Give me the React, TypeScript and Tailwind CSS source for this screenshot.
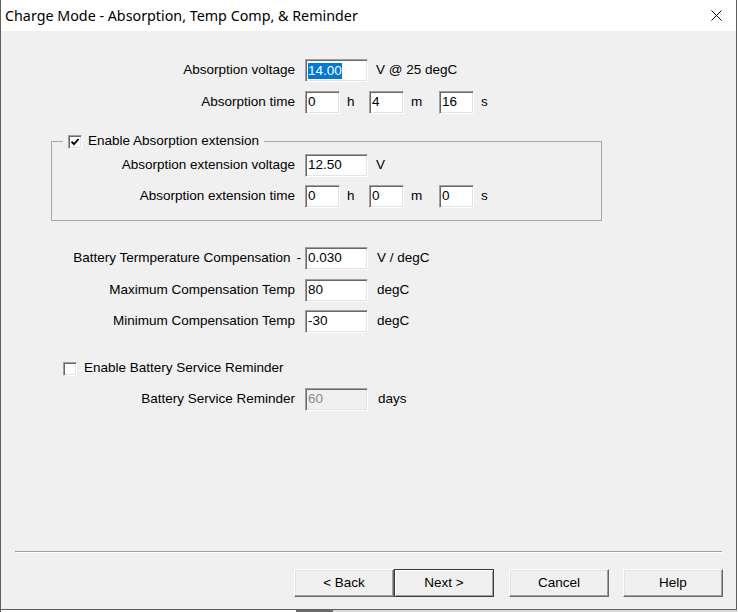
import React from "react";

const sunken =
  "border border-t-[#a0a0a0] border-l-[#a0a0a0] border-r-white border-b-white shadow-[inset_1px_1px_0_#696969,inset_-1px_-1px_0_#e3e3e3]";

function Field(props: {
  value: string;
  w?: string;
  selected?: boolean;
  disabled?: boolean;
}) {
  const w = props.w ?? "w-[63px]";
  return (
    <div
      className={`${sunken} ${w} h-[23px] shrink-0 flex items-center pl-[2px] ${
        props.disabled ? "bg-[#f0f0f0] text-[#8a8a8a]" : "bg-white text-black"
      }`}
    >
      {props.selected ? (
        <span className="bg-[#0078d7] text-white leading-[16px]">{props.value}</span>
      ) : (
        props.value
      )}
    </div>
  );
}

function Row(props: {
  label: React.ReactNode;
  labelW: string;
  className?: string;
  children: React.ReactNode;
}) {
  return (
    <div className={`flex items-center h-[23px] ${props.className ?? ""}`}>
      <div className={`${props.labelW} shrink-0 text-right pr-[10px] whitespace-nowrap`}>
        {props.label}
      </div>
      {props.children}
    </div>
  );
}

function TimeFields(props: { h: string; m: string; s: string }) {
  return (
    <>
      <Field value={props.h} w="w-[35px]" />
      <span className="w-[29px] pl-[7px]">h</span>
      <Field value={props.m} w="w-[35px]" />
      <span className="w-[35px] pl-[7px]">m</span>
      <Field value={props.s} w="w-[35px]" />
      <span className="pl-[7px]">s</span>
    </>
  );
}

function CheckBox(props: { checked?: boolean }) {
  return (
    <div className={`${sunken} w-[14px] h-[14px] bg-white shrink-0 flex items-center justify-center`}>
      {props.checked && (
        <svg width="10" height="10" viewBox="0 0 10 10">
          <path d="M1.5 4.6 L4 7.2 L8.6 2" fill="none" stroke="#000" strokeWidth="1.8" />
        </svg>
      )}
    </div>
  );
}

function Button(props: { label: string; isDefault?: boolean; className?: string }) {
  return (
    <div
      className={`w-[100px] h-[28px] shrink-0 flex items-center justify-center bg-[#f0f0f0] text-black ${
        props.isDefault
          ? "border border-[#3c3c3c] shadow-[inset_1px_1px_0_#fff,inset_-1px_-1px_0_#a0a0a0]"
          : "border border-t-white border-l-white border-r-[#696969] border-b-[#696969] shadow-[inset_-1px_-1px_0_#a0a0a0,inset_1px_1px_0_#e3e3e3]"
      } ${props.className ?? ""}`}
    >
      {props.label}
    </div>
  );
}

export default function App() {
  return (
    <div className="w-[738px] h-[612px] bg-white overflow-hidden flex flex-col">
      <div className="w-[737px] h-[610px] flex flex-col border-l border-r border-b border-[#5f5f5f]">
        {/* title bar */}
        <div className="h-[31px] bg-white flex items-center justify-between pl-[4px] shrink-0">
          <span className="font-['Noto_Sans','Open_Sans',sans-serif] text-[14.3px] text-black">
            Charge Mode - Absorption, Temp Comp, &amp; Reminder
          </span>
          <svg width="11" height="11" viewBox="0 0 11 11" className="mr-[14px]">
            <path d="M0.5 0.5 L10.5 10.5 M10.5 0.5 L0.5 10.5" stroke="#000" strokeWidth="1" />
          </svg>
        </div>

        {/* body */}
        <div className="flex-1 bg-[#f0f0f0] flex flex-col font-['Liberation_Sans',Arial,sans-serif] text-[13.5px] text-black">
          <Row label="Absorption voltage" labelW="w-[304px]" className="mt-[28px]">
            <Field value="14.00" selected />
            <span className="ml-[8px]">V @ 25 degC</span>
          </Row>
          <Row label="Absorption time" labelW="w-[304px]" className="mt-[9px]">
            <TimeFields h="0" m="4" s="16" />
          </Row>

          <fieldset className="ml-[50px] w-[551px] mt-[20px] border border-[#a8a8a8] pb-[12px]">
            <legend className="ml-[11px] px-[5px] h-[15px] flex items-center">
              <CheckBox checked />
              <span className="ml-[6px]">Enable Absorption extension</span>
            </legend>
            <Row label="Absorption extension voltage" labelW="w-[253px]" className="mt-[5px]">
              <Field value="12.50" />
              <span className="ml-[8px]">V</span>
            </Row>
            <Row label="Absorption extension time" labelW="w-[253px]" className="mt-[8px]">
              <TimeFields h="0" m="0" s="0" />
            </Row>
          </fieldset>

          <Row
            label={
              <>
                Battery Termperature Compensation<span className="ml-[6px]">-</span>
              </>
            }
            labelW="w-[304px] !pr-[4px]"
            className="mt-[26px]"
          >
            <Field value="0.030" />
            <span className="ml-[9px]">V / degC</span>
          </Row>
          <Row label="Maximum Compensation Temp" labelW="w-[304px]" className="mt-[9px]">
            <Field value="80" />
            <span className="ml-[9px]">degC</span>
          </Row>
          <Row label="Minimum Compensation Temp" labelW="w-[304px]" className="mt-[8px]">
            <Field value="-30" />
            <span className="ml-[9px]">degC</span>
          </Row>

          <div className="mt-[28px] ml-[62px] h-[15px] flex items-center">
            <CheckBox />
            <span className="ml-[7px]">Enable Battery Service Reminder</span>
          </div>
          <Row label="Battery Service Reminder" labelW="w-[304px]" className="mt-[12px]">
            <Field value="60" disabled />
            <span className="ml-[10px]">days</span>
          </Row>

          <div className="flex-1" />
          <div className="ml-[14px] w-[707px] h-[2px] border-t border-[#a0a0a0] border-b border-b-white" />
          <div className="flex justify-end pr-[13px] mt-[16px] mb-[12px]">
            <Button label="< Back" />
            <Button label="Next >" isDefault />
            <Button label="Cancel" className="ml-[15px]" />
            <Button label="Help" className="ml-[14px]" />
          </div>
        </div>
      </div>
      <div className="h-[2px] flex">
        <div className="w-[296px] bg-white border-l border-[#5f5f5f]" />
        <div className="w-[37px] bg-[#6d6d6d]" />
        <div className="flex-1 bg-[#dadada]" />
      </div>
    </div>
  );
}
